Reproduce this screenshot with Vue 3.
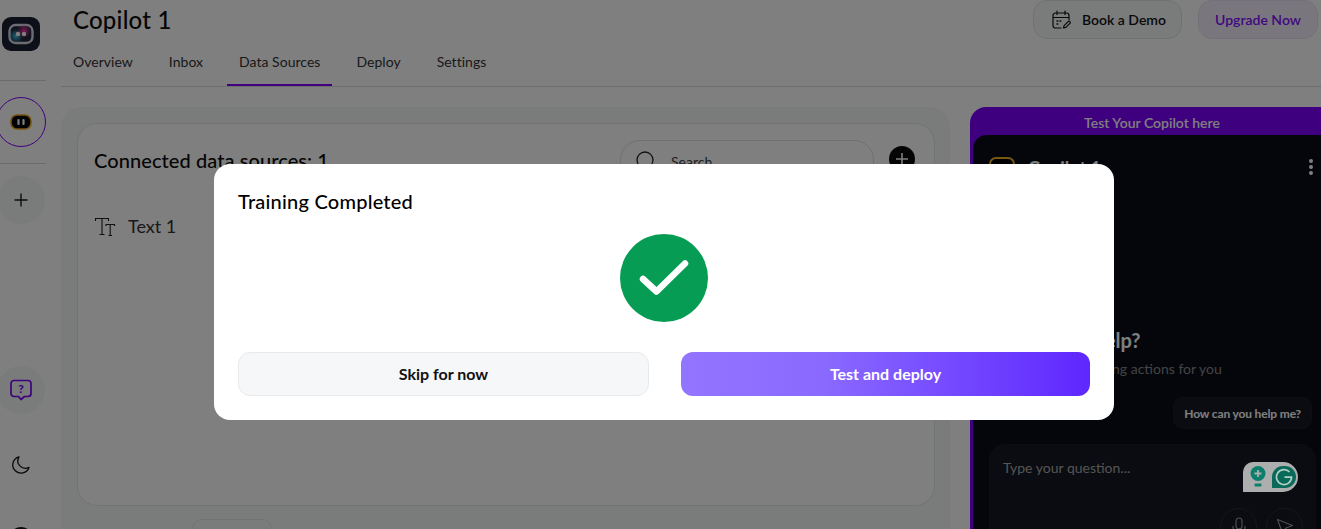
<template>
  <div class="page">
    <aside class="sidebar">
      <div class="logo">
        <svg width="38" height="34" viewBox="0 0 38 34">
          <defs>
            <radialGradient id="glowBlue"><stop offset="0" stop-color="#39c6f0" /><stop offset="1" stop-color="#39c6f0" stop-opacity="0" /></radialGradient>
            <radialGradient id="glowPink"><stop offset="0" stop-color="#f02fa8" /><stop offset="1" stop-color="#f02fa8" stop-opacity="0" /></radialGradient>
          </defs>
          <rect width="38" height="34" x="0" y="0" rx="9" fill="#1d2033" />
          <rect x="7.500" y="8" width="23" height="18" rx="6" fill="#23263a" stroke="#d8dae4" stroke-width="2.400" />
          <circle cx="14" cy="19" r="7" fill="url(#glowBlue)" />
          <circle cx="22" cy="14" r="7" fill="url(#glowPink)" />
          <circle cx="16" cy="17" r="2.200" fill="#fff" />
          <circle cx="22" cy="17" r="2.200" fill="#fff" />
        </svg>
      </div>
      <div class="side-rule"></div>
      <div class="bot-ring">
        <svg width="22" height="16" viewBox="0 0 22 16">
          <rect x="1" y="1" width="20" height="14" rx="6" fill="#05060c" stroke="#f0a81c" stroke-width="1.600" />
          <path d="M8.500 6v4M13.500 6v4" stroke="#fff" stroke-width="2.200" stroke-linecap="round" />
        </svg>
      </div>
      <div class="side-rule"></div>
      <div class="round-btn add-btn">
        <svg width="16" height="16" viewBox="0 0 16 16"><path d="M8 1.500v13M1.500 8h13" fill="none" stroke="#1a1a1a" stroke-width="1.400" /></svg>
      </div>
      <div class="round-btn help-btn">
        <svg width="24" height="24" viewBox="0 0 24 24">
          <path d="M5 2.500h14a3 3 0 0 1 3 3v10a3 3 0 0 1-3 3h-3.500l-3.500 3-2.500-3H5a3 3 0 0 1-3-3v-10a3 3 0 0 1 3-3z" fill="none" stroke="#7f00ff" stroke-width="1.700" stroke-linejoin="round" />
          <text x="12" y="14.500" text-anchor="middle" class="help-mark">?</text>
        </svg>
      </div>
      <svg class="moon" width="20" height="20" viewBox="0 0 20 20">
        <path d="M8 1.800a8.300 8.300 0 1 0 10 10.500 7.500 7.500 0 0 1-10-10.500z" fill="none" stroke="#111" stroke-width="1.300" stroke-linejoin="round" />
      </svg>
      <div class="avatar"></div>
    </aside>

    <main class="main">
      <header class="header">
        <div class="title-row">
          <h1>Copilot 1</h1>
          <div class="actions">
            <button class="demo-btn">
              <svg width="20" height="20" viewBox="0 0 20 20">
                <path d="M10 18H4.500A2.500 2.500 0 0 1 2 15.500V5.500A2.500 2.500 0 0 1 4.500 3h11A2.500 2.500 0 0 1 18 5.500V10M2 7.500h16M6 1v3.500M14 1v3.500" fill="none" stroke="#111" stroke-width="1.200" stroke-linecap="round" />
                <path d="M6 11h.8M9 11h.8M6 14h.8" stroke="#111" stroke-width="1.400" stroke-linecap="round" />
                <path d="M12.500 18l.6-2.400 4-4a1.200 1.200 0 0 1 1.800 1.800l-4 4z" fill="none" stroke="#111" stroke-width="1.200" stroke-linejoin="round" />
              </svg>
              Book a Demo
            </button>
            <button class="upgrade-btn">Upgrade Now</button>
          </div>
        </div>
        <nav class="tabs">
          <a v-for="tab in tabs" :key="tab" class="tab" :class="{ active: tab === 'Data Sources' }">{{ tab }}</a>
        </nav>
      </header>

      <div class="content">
        <section class="panel">
          <div class="card">
            <div class="card-head">
              <h2>Connected data sources: 1</h2>
              <div class="card-tools">
                <div class="search">
                  <svg width="20" height="20" viewBox="0 0 20 20"><circle cx="9" cy="9" r="8" fill="none" stroke="#222" stroke-width="1.300" /><path d="M15 15l4 4" stroke="#222" stroke-width="1.300" /></svg>
                  <span>Search</span>
                </div>
                <div class="plus-dot">
                  <svg width="14" height="14" viewBox="0 0 14 14"><path d="M7 1v12M1 7h12" stroke="#fff" stroke-width="1.600" /></svg>
                </div>
              </div>
            </div>
            <div class="source">
              <svg width="22" height="22" viewBox="0 0 22 22">
                <path d="M1.500 5V2.500h13V5M8 2.500v16M5.500 18.500h5M12 10V8.500h8.500V10M16.200 8.500v11M14.500 19.500h3.500" fill="none" stroke="#222" stroke-width="1.100" />
              </svg>
              <span>Text 1</span>
            </div>
          </div>
          <div class="pager"></div>
        </section>

        <section class="preview">
          <div class="preview-title">Test Your Copilot here</div>
          <div class="chat">
            <div class="chat-head">
              <div class="chat-bot"></div>
              <strong>Copilot 1</strong>
              <span class="dots"><i></i><i></i><i></i></span>
            </div>
            <div class="chat-hello">
              <h3>How can I help?</h3>
              <p>I can help by taking actions for you</p>
            </div>
            <div class="suggest-row"><span class="suggest">How can you help me?</span></div>
            <div class="composer">
              <span class="placeholder">Type your question...</span>
              <div class="grammarly">
                <svg width="18" height="24" viewBox="0 0 18 24">
                  <circle cx="9" cy="8.500" r="7.500" fill="#0c7f6c" />
                  <path d="M9 5v7M5.500 8.500h7" stroke="#adafae" stroke-width="1.800" />
                  <rect x="5.500" y="18.500" width="7" height="3" rx="1" fill="#0c7f6c" />
                </svg>
                <div class="g-mark">
                  <svg width="18" height="18" viewBox="0 0 18 18">
                    <path d="M14.500 4a7.500 7.500 0 1 0 2 5.200H9.500" fill="none" stroke="#b0d0c6" stroke-width="1.700" />
                  </svg>
                </div>
              </div>
              <div class="composer-tools">
                <div class="tool">
                  <svg width="14" height="20" viewBox="0 0 14 20"><rect x="4" y="1" width="6" height="11" rx="3" fill="none" stroke="#999" stroke-width="1.200" /><path d="M1 9v1a6 6 0 0 0 12 0V9M7 16v3" fill="none" stroke="#999" stroke-width="1.200" /></svg>
                </div>
                <div class="tool">
                  <svg width="18" height="18" viewBox="0 0 18 18"><path d="M1.500 1.500l15 6-6.500 2.500L7 16.500z" fill="none" stroke="#999" stroke-width="1.200" stroke-linejoin="round" /></svg>
                </div>
              </div>
            </div>
          </div>
        </section>
      </div>
    </main>

    <div class="mask">
      <div class="modal">
        <h4>Training Completed</h4>
        <div class="done">
          <svg width="88" height="88" viewBox="0 0 88 88">
            <circle cx="44" cy="44" r="44" fill="#079c54" />
            <path d="M23 45L36.500 57.500 65 29.500" fill="none" stroke="#fff" stroke-width="6.500" stroke-linecap="round" stroke-linejoin="round" />
          </svg>
        </div>
        <div class="modal-actions">
          <button class="skip">Skip for now</button>
          <button class="deploy">Test and deploy</button>
        </div>
      </div>
    </div>
  </div>
</template>

<script setup>
const tabs = ['Overview', 'Inbox', 'Data Sources', 'Deploy', 'Settings']
</script>

<style>
html, body {
  margin: 0;
  overflow: hidden;
}
</style>

<style scoped>
.page {
  display: flex;
  width: 1321px;
  height: 529px;
  overflow: hidden;
  background: #fff;
  font-family: Lato, "Liberation Sans", sans-serif;
  color: #0a0a0a;
}

/* sidebar */
.sidebar {
  flex: 0 0 61px;
  display: flex;
  flex-direction: column;
  width: 46px;
}
.logo {
  flex: none;
  margin: 17px 0 0 2px;
  height: 34px;
}
.side-rule {
  flex: none;
  width: 46px;
  height: 1px;
  margin-top: 29px;
  background: #d6d6da;
}
.bot-ring {
  flex: none;
  display: flex;
  align-items: center;
  justify-content: center;
  width: 50px;
  height: 50px;
  margin: 16px 0 0 -4px;
  box-sizing: border-box;
  border: 1px solid #7f00ff;
  border-radius: 50%;
}
.bot-ring + .side-rule {
  margin-top: 16px;
}
.round-btn {
  flex: none;
  display: flex;
  align-items: center;
  justify-content: center;
  width: 48px;
  height: 48px;
  margin-left: -3px;
  border-radius: 50%;
  background: #f5f7f6;
}
.add-btn {
  margin-top: 12px;
}
.help-btn {
  margin-top: 142px;
}
.moon {
  margin: 41px 0 0 11px;
  flex: none;
}
.avatar {
  flex: none;
  width: 24px;
  height: 24px;
  margin: 52px 0 0 9px;
  border-radius: 50%;
  background: #111;
}
.help-mark {
  font: 900 12px Lato, sans-serif;
  fill: #7f00ff;
}

/* header */
.main {
  flex: 1;
  min-width: 0;
}
.header {
  height: 87px;
  box-sizing: border-box;
  border-bottom: 1px solid #dcdcdf;
}
.title-row {
  display: flex;
  justify-content: space-between;
  align-items: flex-start;
  height: 40px;
  padding-right: 3px;
}
h1 {
  margin: 0 0 0 12px;
  font-size: 24px;
  font-weight: 500;
  letter-spacing: .22px;
  line-height: 40px;
}
.actions {
  display: flex;
  gap: 16px;
}
.demo-btn, .upgrade-btn {
  height: 39px;
  box-sizing: border-box;
  border-radius: 14px;
  font: 600 14px Lato, sans-serif;
}
.demo-btn {
  display: flex;
  align-items: center;
  gap: 11px;
  width: 149px;
  padding: 0 0 0 17px;
  border: 1px solid #dfe4e2;
  background: #f5f7f6;
  color: #111;
}
.upgrade-btn {
  width: 120px;
  padding: 0;
  border: 1px solid #e6e0f3;
  background: #f3effa;
  color: #7f10ff;
}
.tabs {
  display: flex;
  gap: 12px;
  height: 46px;
}
.tab {
  display: block;
  height: 46px;
  box-sizing: border-box;
  padding: 13px 12px 0;
  font-size: 14px;
  line-height: 18px;
  letter-spacing: .03px;
  color: #333;
}
.active {
  border-bottom: 2px solid #7f00ff;
}

/* content */
.content {
  display: flex;
  gap: 20px;
  padding-top: 20px;
}
.panel {
  flex: 0 0 889px;
  height: 460px;
  box-sizing: border-box;
  padding: 16px 15px 0 16px;
  border-radius: 20px;
  background: #f5f7f6;
}
.card {
  height: 383px;
  box-sizing: border-box;
  border: 1px solid #e6e6e8;
  border-radius: 20px;
  padding: 16px;
  background: #fefefe;
}
.card-head {
  display: flex;
  justify-content: space-between;
  align-items: center;
  height: 42px;
}
h2 {
  margin: 0 0 2px;
  font-size: 20px;
  font-weight: 500;
  letter-spacing: .08px;
}
.card-tools {
  display: flex;
  align-items: center;
  gap: 15px;
  margin-right: 3px;
}
.search {
  display: flex;
  align-items: center;
  gap: 15px;
  width: 254px;
  height: 42px;
  box-sizing: border-box;
  padding-left: 15px;
  border: 1px solid #dfe1e3;
  border-radius: 20px;
  font-size: 14px;
  color: #444;
}
.plus-dot {
  display: flex;
  align-items: center;
  justify-content: center;
  width: 26px;
  height: 26px;
  margin-top: -4px;
  border-radius: 50%;
  background: #0a0a0a;
}
.source {
  display: flex;
  align-items: center;
  gap: 12px;
  height: 22px;
  margin-top: 33px;
  font-size: 18px;
  color: #333;
}
.source svg {
  margin-top: 1px;
}
.pager {
  width: 80px;
  height: 24px;
  margin: 13px 0 0 115px;
  box-sizing: border-box;
  border: 1px solid #e6e6e8;
  border-radius: 10px;
}

/* chat preview */
.preview {
  flex: 1;
  height: 440px;
  box-sizing: border-box;
  padding: 0 0 0 3px;
  border-radius: 16px 0 0 0;
  background: #7f00ff;
}
.preview-title {
  height: 28px;
  padding-left: 10px;
  font-size: 14px;
  font-weight: 600;
  line-height: 32px;
  text-align: center;
  color: #fff;
}
.chat {
  height: 412px;
  box-sizing: border-box;
  padding: 0 5px 0 16px;
  border-radius: 14px 0 0 0;
  background: #0b0d18;
  color: #fff;
}
.chat-head {
  display: flex;
  align-items: center;
  gap: 13px;
  height: 70px;
}
.chat-bot {
  width: 26px;
  height: 26px;
  box-sizing: border-box;
  border: 2px solid #f0b020;
  border-radius: 7px;
  background: #000;
}
.chat-head strong {
  flex: 1;
  margin-top: -4px;
  font-size: 18px;
}
.dots {
  display: flex;
  flex-direction: column;
  gap: 2px;
  margin: -6px 3px 0 0;
}
.dots i {
  display: block;
  width: 4px;
  height: 4px;
  border-radius: 50%;
  background: #fff;
}
.chat-hello {
  padding: 122px 0 0 13px;
}
h3 {
  margin: 0 0 0 -2px;
  font-size: 20px;
  line-height: 26px;
  color: #fff;
}
.chat-hello p {
  margin: 7px 0 0 7px;
  font-size: 14px;
  line-height: 18px;
  color: #888;
}
.suggest-row {
  display: flex;
  justify-content: flex-end;
  margin: 19px 4px 0 0;
}
.suggest {
  display: block;
  height: 32px;
  box-sizing: border-box;
  padding: 0 10px;
  border: 1px solid #1b1d27;
  border-radius: 10px;
  background: #171923;
  font-size: 12px;
  font-weight: 700;
  letter-spacing: -.15px;
  line-height: 31px;
  color: #fff;
}
.composer {
  position: relative;
  height: 120px;
  margin-top: 15px;
  box-sizing: border-box;
  padding: 12px 13px;
  border: 1px solid #1b1d27;
  border-radius: 16px;
  background: #171923;
}
.placeholder {
  font-size: 14px;
  color: #aaa;
}
.grammarly {
  position: absolute;
  z-index: 1;
  top: 17px;
  right: 17px;
  display: flex;
  align-items: center;
  gap: 5px;
  width: 55px;
  height: 30px;
  box-sizing: border-box;
  padding-left: 6px;
  border-radius: 10px 15px 15px 0;
  background: #adafae;
}
.g-mark {
  display: flex;
  align-items: center;
  justify-content: center;
  width: 24px;
  height: 22px;
  border-radius: 11px 11px 11px 0;
  background: #0a6a5a;
}
.composer-tools {
  position: absolute;
  top: 63px;
  right: 12px;
  display: flex;
  gap: 9px;
}
.tool {
  display: flex;
  align-items: center;
  justify-content: center;
  width: 37px;
  height: 37px;
  box-sizing: border-box;
  border: 1px solid #2a2c36;
  border-radius: 50%;
}

/* modal */
.mask {
  position: fixed;
  inset: 0;
  background: rgba(0, 0, 0, .5);
}
.modal {
  width: 900px;
  height: 256px;
  margin: 164px 0 0 214px;
  box-sizing: border-box;
  padding: 24px;
  border-radius: 16px;
  background: #fff;
}
h4 {
  margin: 0;
  font-size: 20px;
  font-weight: 500;
  letter-spacing: .22px;
  line-height: 26px;
  color: #000;
}
.done {
  display: flex;
  justify-content: center;
  height: 88px;
  margin-top: 20px;
}
.modal-actions {
  display: grid;
  grid-template-columns: 411px 409px;
  gap: 32px;
  margin-top: 30px;
}
.skip, .deploy {
  height: 44px;
  box-sizing: border-box;
  padding: 0 0 2px;
  border-radius: 12px;
  font: 700 16px Lato, sans-serif;
}
.skip {
  border: 1px solid #e9eaec;
  background: #f6f7f9;
  color: #111;
}
.deploy {
  border: 0;
  background: linear-gradient(90deg, #9275ff 0%, #8a69ff 35%, #5e27ff 100%);
  color: #fff;
}
</style>
